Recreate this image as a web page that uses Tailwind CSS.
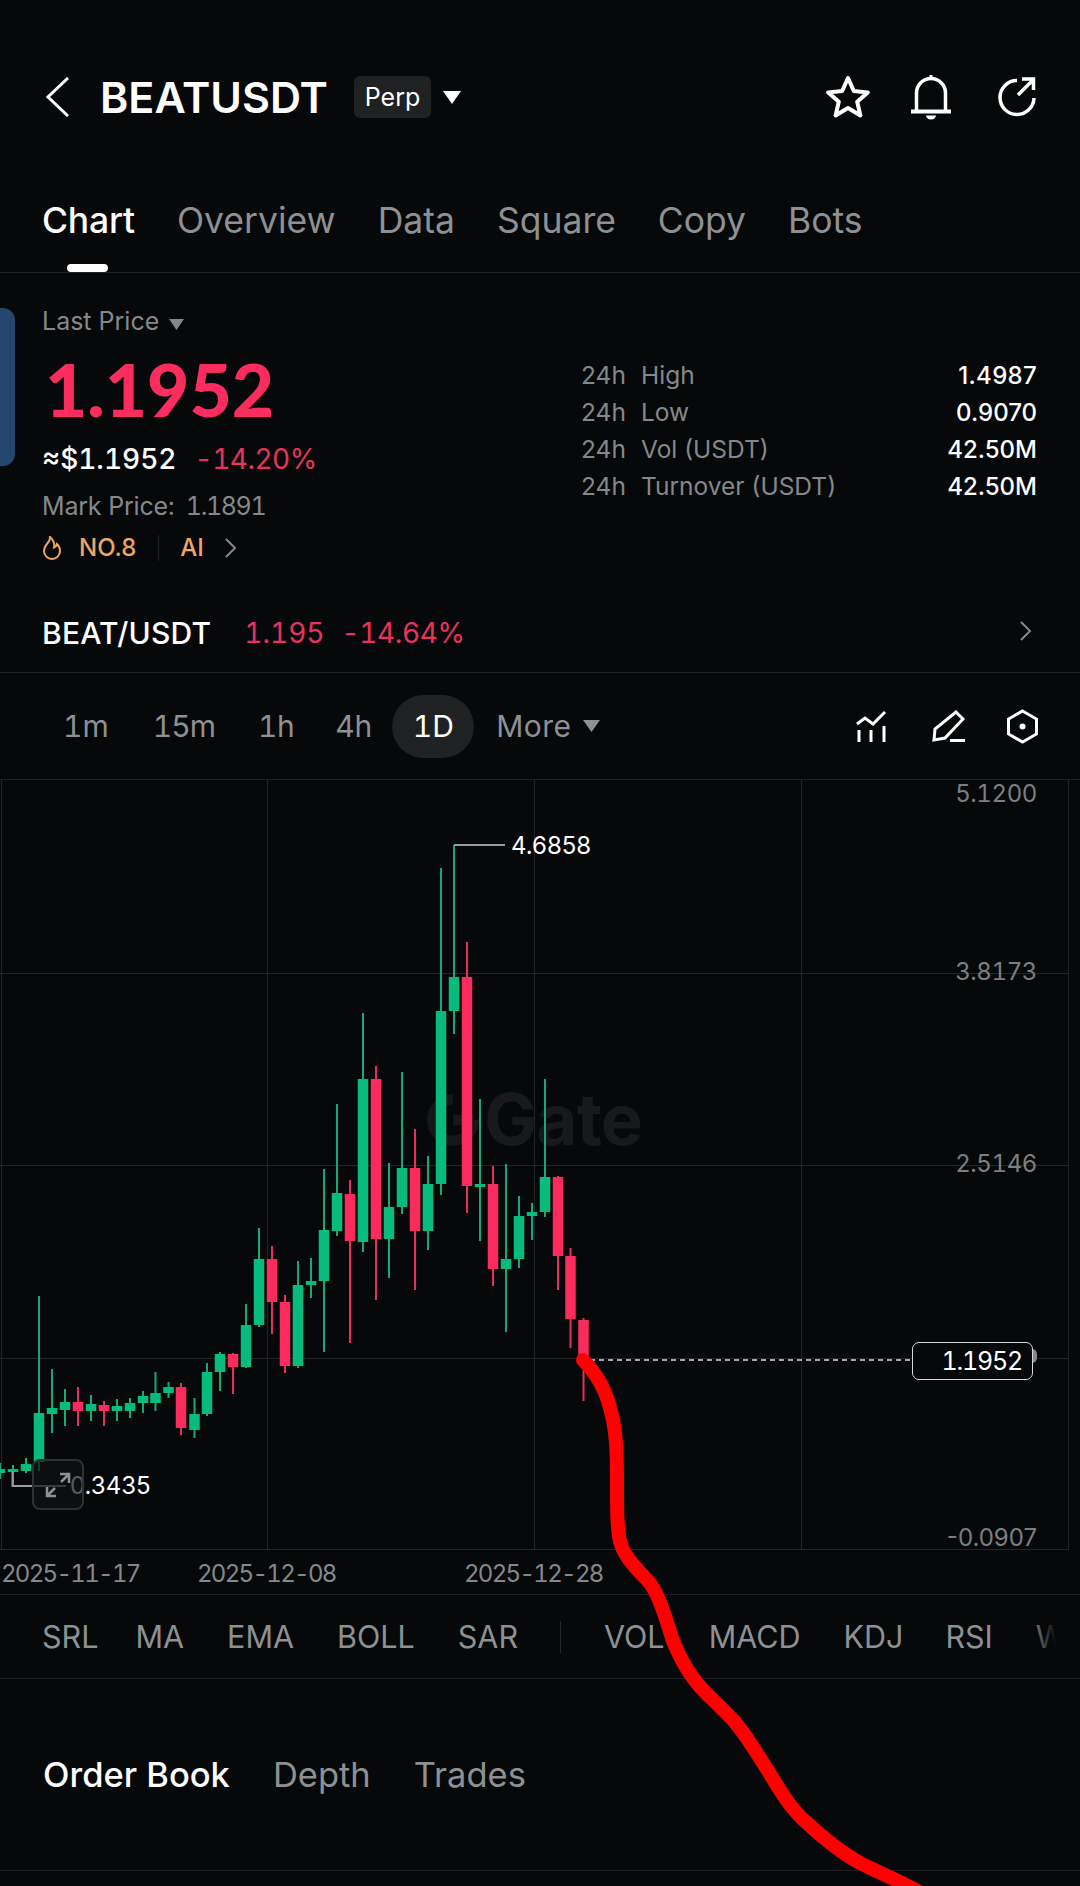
<!DOCTYPE html>
<html><head><meta charset="utf-8">
<script src="https://cdn.jsdelivr.net/npm/@tailwindcss/browser@4"></script>
</head>
<body class="bg-[#060809]">
<div class="relative w-[1080px] h-[1886px] overflow-hidden bg-[#060809] text-white font-['Inter',sans-serif]">

  <header class="h-[194px] flex items-center pl-[45px] pr-[44px]">
    <svg class="w-[24px] h-[40px] mr-[31px]" viewBox="0 0 24 40" fill="none" stroke="#fff" stroke-width="3"><path d="M23 1 3 20l20 19"/></svg>
    <span class="text-[43px] font-semibold leading-none">BEATUSDT</span>
    <span class="ml-[26px] h-[42px] w-[77px] rounded-[6px] bg-[#1f2122] flex items-center justify-center pt-[2px] text-[25px]">Perp</span>
    <svg class="ml-[12px] w-[18px] h-[13px]" viewBox="0 0 18 13" fill="#fff"><path d="M0 0h18L9 13z"/></svg>
    <div class="ml-auto flex items-center">
      <svg class="w-[44px] h-[44px]" viewBox="0 0 44 44" fill="none" stroke="#fff" stroke-width="4" stroke-linejoin="round"><path d="M22 3l5.800 13 14 1.400-10.600 9.300 3.200 13.800L22 33l-12.400 7.500 3.200-13.800L2.200 17.400l14-1.400z"/></svg>
      <svg class="ml-[41px] w-[40px] h-[46px]" viewBox="0 0 40 46" fill="none" stroke="#fff" stroke-width="3.500"><path d="M5.500 37V19a14.500 14.500 0 0 1 29 0v18"/><path d="M0 37.500h40" stroke-width="4"/><path d="M20 1v3" stroke-width="3"/><path d="M15 41.500h10a5 4 0 0 1-10 0z" fill="#fff" stroke="none"/></svg>
      <svg class="ml-[45px] w-[40px] h-[42px]" viewBox="0 0 40 42" fill="none" stroke="#fff" stroke-width="3.500"><path d="M21 4.500A17 17 0 1 0 38 22"/><path d="M22 19 37 4M26 3h11.500v11"/></svg>
    </div>
  </header>

  <nav class="relative h-[79px] border-b border-[#1d1f20] flex items-start pl-[42px] gap-[42px] text-[35.5px] leading-[54px] text-[#8e9194]">
    <span class="text-white font-medium tracking-[-0.2px]">Chart</span>
    <span>Overview</span><span>Data</span><span>Square</span><span>Copy</span><span>Bots</span>
    <span class="absolute left-[67px] bottom-0 w-[41px] h-[8px] rounded-full bg-white"></span>
  </nav>

  <section class="relative h-[400px] border-b border-[#1d1f20] flex justify-between pl-[42px] pr-[43px]">
    <span class="absolute left-0 top-[35px] w-[15px] h-[158px] rounded-r-[12px] bg-[#24466f]"></span>
    <div class="pt-[34px]">
      <div class="flex items-center h-[30px] text-[25px] text-[#85888b]">Last Price
        <svg class="ml-[10px] mt-[4px] w-[15px] h-[11px]" viewBox="0 0 15 11" fill="#85888b"><path d="M0 0h15L7.500 11z"/></svg>
      </div>
      <div class="mt-[16px] h-[72px] flex items-center pl-[3px] text-[73px] font-black leading-none text-[#fb2d5e] font-['Lato',sans-serif]">1.1952</div>
      <div class="mt-[16px] h-[36px] flex items-center text-[28px] font-medium tabular-nums">≈$1.1952<span class="ml-[18px] font-normal tracking-[-0.5px] text-[#e8325f]">-14.20%</span></div>
      <div class="mt-[12px] h-[36px] flex items-center text-[25px] text-[#85888b]"><span class="tracking-[-0.2px]">Mark Price:</span><span class="ml-[11px] tabular-nums tracking-[-1.400px]">1.1891</span></div>
      <div class="mt-[5px] h-[36px] flex items-center text-[24px] font-medium text-[#eca765]">
        <svg class="mr-[17px] w-[20px] h-[24px]" viewBox="0 0 20 24" fill="none" stroke="#eca765" stroke-width="2"><path d="M8 1c1 5-6 7-6 14a8 8 0 0 0 16 0c0-3-1-5-3-7-.5 2-1.500 3-3 3.500C13 8 11 3 8 1z"/></svg>
        <span>NO.8</span>
        <span class="ml-[22px] w-px h-[26px] bg-[#1f2122]"></span>
        <span class="ml-[21px]">AI</span>
        <svg class="ml-[21px] w-[12px] h-[20px]" viewBox="0 0 12 20" fill="none" stroke="#85888b" stroke-width="2"><path d="M1 1l9 9-9 9"/></svg>
      </div>
    </div>
    <div class="pt-[84px] w-[456px] text-[24.5px] leading-[37px] text-[#85888b]">
      <div class="flex"><span class="w-[60px]">24h</span><span>High</span><span class="ml-auto text-[24px] text-white font-medium tracking-[0.3px]">1.4987</span></div>
      <div class="flex"><span class="w-[60px]">24h</span><span>Low</span><span class="ml-auto text-[24px] text-white font-medium">0.9070</span></div>
      <div class="flex"><span class="w-[60px]">24h</span><span>Vol (USDT)</span><span class="ml-auto text-[24px] text-white font-medium">42.50M</span></div>
      <div class="flex"><span class="w-[60px]">24h</span><span>Turnover (USDT)</span><span class="ml-auto text-[24px] text-white font-medium">42.50M</span></div>
    </div>
    <div class="absolute left-[42px] right-[48px] bottom-[20px] h-[38px] flex items-center text-[30px] font-medium">
      <span class="tracking-[0.2px]">BEAT/USDT</span>
      <span class="ml-[33px] text-[28px] font-normal tabular-nums text-[#e8325f]">1.195</span>
      <span class="ml-[17px] text-[28px] font-normal tabular-nums tracking-[-0.4px] text-[#e8325f]">-14.64%</span>
      <svg class="ml-auto mb-[4px] w-[12px] h-[20px]" viewBox="0 0 12 20" fill="none" stroke="#85888b" stroke-width="2"><path d="M1 1l9 9-9 9"/></svg>
    </div>
  </section>

  <div class="h-[107px] border-b border-[#1d1f20] flex items-center pl-[63px] pr-[42px] text-[30px] text-[#8e9194] tabular-nums">
    <span>1m</span><span class="ml-[44px] tracking-[-1px]">15m</span><span class="ml-[43px] tracking-[-0.5px]">1h</span><span class="ml-[41px]">4h</span>
    <span class="ml-[20px] w-[82px] h-[63px] rounded-full bg-[#1f2122] text-white flex items-center justify-center">1D</span>
    <span class="ml-[22px] tracking-[0.4px]">More</span>
    <svg class="ml-[12px] w-[17px] h-[12px]" viewBox="0 0 17 12" fill="#8e9194"><path d="M0 0h17L8.500 12z"/></svg>
    <div class="ml-auto flex items-center">
      <svg class="w-[30px] h-[32px]" viewBox="0 0 30 32" fill="none" stroke="#fff" stroke-width="3"><path d="M1 14l8-6 8 6L29 2"/><path d="M3 20v12M15 20v12M28 16v16"/></svg>
      <svg class="ml-[46px] w-[33px] h-[33px]" viewBox="0 0 33 33" fill="none" stroke="#fff" stroke-width="3"><path d="M24 2l7 7-18 19-11 2 1-11z"/><path d="M18 30.500h15"/></svg>
      <svg class="ml-[42px] w-[31px] h-[35px]" viewBox="0 0 31 35" fill="none" stroke="#fff" stroke-width="3"><path d="M15.500 2l14 8v15l-14 8-14-8V10z"/><circle cx="15.500" cy="17.500" r="3" fill="#fff" stroke="none"/></svg>
    </div>
  </div>

  <section class="relative h-[770px]">
    <div class="absolute left-[424px] top-[304px] flex items-center gap-[2px] text-[#17191a]">
      <svg class="w-[58px] h-[58px]" viewBox="0 0 56 56" fill="none" stroke="#151718" stroke-width="10"><path d="M48 28A20 20 0 1 1 28 8"/><path d="M28 28h20" /></svg>
      <span class="text-[71px] font-bold leading-none tracking-[-1px]">Gate</span>
    </div>

    <svg class="absolute left-0 top-0 w-[1080px] h-[770px]" viewBox="0 779 1080 770" fill="none">
      <path stroke="#222425" stroke-width="1" d="M0 972.500H1069M0 1164.500H1069M0 1357.500H1069M0 1548.500H1069M1.500 779V1549M267.500 779V1549M534.500 779V1549M801.500 779V1549M1068.500 779V1549"/>
      <g stroke="#16a877" stroke-width="2">
        <path d="M0 1462V1478M13 1464V1485M26 1457V1472M39 1295V1470M52 1368V1432M65 1388V1425M91 1394V1420M117 1398V1420M130 1397V1417M143 1390V1412M155.500 1371V1410M168.500 1381V1397M194.500 1397V1437M207 1362V1415M220 1351V1390M246 1303V1367M259 1227V1326M298 1260V1367M311 1257V1297M324 1168V1351M337 1103V1235M363 1012V1251M389 1162V1277M402 1071V1213M428 1155V1249M441 867V1194M454 844V1033M480 1098V1240M506 1163V1331M519 1195V1267M532 1202V1239M545 1078V1216"/>
      </g>
      <g stroke="#e62f5c" stroke-width="2">
        <path d="M78 1386V1425M104 1400V1425M181 1382V1434M233 1352V1393M272 1245V1333M285 1294V1372M350 1179V1342M376 1065V1299M415 1128V1289M467 941V1212M493 1165V1285M558 1175V1289M570.500 1247V1347M583.500 1317V1400"/>
      </g>
      <g stroke="#06bb7c" stroke-width="10.500">
        <path d="M0 1468V1472M13 1468V1471M26 1463V1470M39 1412V1461M52 1407V1413M65 1401V1409M91 1403V1410M117 1405V1410M130 1402V1410M143 1395V1402M155.500 1392V1402M168.500 1386V1392M194.500 1413V1429M207 1371V1413M220 1353V1371M246 1324V1366M259 1258V1324M298 1284V1365M311 1280V1284M324 1229V1280M337 1192V1230M363 1078V1241M389 1206V1238M402 1167V1206M428 1183V1230M441 1010V1183M454 976V1010M480 1183V1186M506 1258V1268M519 1215V1258M532 1211V1215M545 1176V1211"/>
      </g>
      <g stroke="#fc2b5d" stroke-width="10.500">
        <path d="M78 1401V1410M104 1404V1410M181 1386V1427M233 1353V1366M272 1258V1301M285 1301V1365M350 1193V1240M376 1078V1238M415 1167V1230M467 976V1185M493 1183V1268M558 1176V1255M570.500 1255V1318M583.500 1319V1358"/>
      </g>
      <path stroke="#9a9c9e" stroke-width="2" d="M454 844H505M12.500 1470V1485H66"/>
      <path stroke="#d8d9da" stroke-width="1.500" stroke-dasharray="5 4" d="M590 1359H912"/>
    </svg>

    <div class="absolute right-[43px] top-[-1px] text-[24px] leading-[30px] tabular-nums tracking-[-0.4px] text-[#7c7f82]">5.1200</div>
    <div class="absolute right-[43px] top-[177px] text-[24px] leading-[30px] tabular-nums tracking-[-0.4px] text-[#7c7f82]">3.8173</div>
    <div class="absolute right-[43px] top-[369px] text-[24px] leading-[30px] tabular-nums tracking-[-0.4px] text-[#7c7f82]">2.5146</div>
    <div class="absolute right-[43px] top-[743px] text-[24px] leading-[30px] text-[#7c7f82]">-0.0907</div>

    <div class="absolute left-[511px] top-[51px] text-[24px] leading-[30px] text-white">4.6858</div>
    <div class="absolute left-[70px] top-[691px] text-[24px] leading-[30px] text-white">0.3435</div>

    <div class="absolute left-[32px] top-[679px] w-[52px] h-[51px] rounded-[8px] border-2 border-[#2e3031] bg-[#101213]/70 flex items-center justify-center">
      <svg class="w-[26px] h-[26px]" viewBox="0 0 26 26" fill="none" stroke="#8e9194" stroke-width="2.500"><path d="M2 24 10 16M2 15v9h9M24 2l-8 8M15 2h9v9"/></svg>
    </div>

    <span class="absolute left-[1032px] top-[569px] w-[5px] h-[14px] rounded-r-full bg-[#85888b]"></span>
    <div class="absolute left-[912px] top-[562px] w-[121px] h-[38px] rounded-[7px] border border-[#d8d9da] bg-[#060809] flex items-center justify-end pr-[10px] pt-[2px] text-[25px] tabular-nums tracking-[-1.200px] text-white">1.1952</div>
  </section>

  <div class="relative h-[44px] text-[24px] leading-[48px] tabular-nums tracking-[-1.700px] text-[#85888b]">
    <span class="absolute left-[1px]">2025-11-17</span>
    <span class="absolute left-[197px]">2025-12-08</span>
    <span class="absolute left-[464px]">2025-12-28</span>
  </div>

  <div class="relative h-[85px] border-t border-b border-[#1d1f20] flex items-center pl-[42px] text-[30.500px] text-[#8e9194] overflow-hidden">
    <span class="shrink-0">SRL</span><span class="shrink-0 ml-[37px]">MA</span><span class="shrink-0 ml-[43px]">EMA</span><span class="shrink-0 ml-[43px]">BOLL</span><span class="shrink-0 ml-[43px]">SAR</span>
    <span class="shrink-0 ml-[42px] w-px h-[32px] bg-[#26282a]"></span>
    <span class="shrink-0 ml-[43px]">VOL</span><span class="shrink-0 ml-[44px]">MACD</span><span class="shrink-0 ml-[43px]">KDJ</span><span class="shrink-0 ml-[42px]">RSI</span><span class="shrink-0 ml-[43px]">WR</span>
    <span class="absolute right-0 top-0 w-[24px] h-full bg-[#060809]"></span>
    <span class="absolute right-[24px] top-0 w-[26px] h-full bg-gradient-to-r from-transparent to-[#060809]"></span>
  </div>

  <div class="h-[192px] border-b border-[#1d1f20] flex items-center pl-[43px] gap-[43px] text-[34.500px] text-[#8e9194]">
    <span class="text-white font-medium">Order Book</span><span>Depth</span><span>Trades</span>
  </div>

  <svg class="absolute left-0 top-0 w-[1080px] h-[1886px] pointer-events-none" viewBox="0 0 1080 1886" fill="none">
    <path stroke="#fe0000" stroke-width="14" stroke-linecap="round" stroke-linejoin="round" d="M583 1360C595 1372 605 1388 610 1408C616 1428 617 1450 617 1480C617 1510 617 1528 620 1541C623 1556 638 1570 649 1582C660 1596 666 1620 673 1641C680 1658 690 1677 705 1692C715 1702 724 1710 733 1720C745 1733 758 1755 770 1774C782 1794 792 1810 806 1822C820 1835 840 1852 860 1863C880 1873 900 1881 921 1893"/>
  </svg>
</div>
</body></html>
